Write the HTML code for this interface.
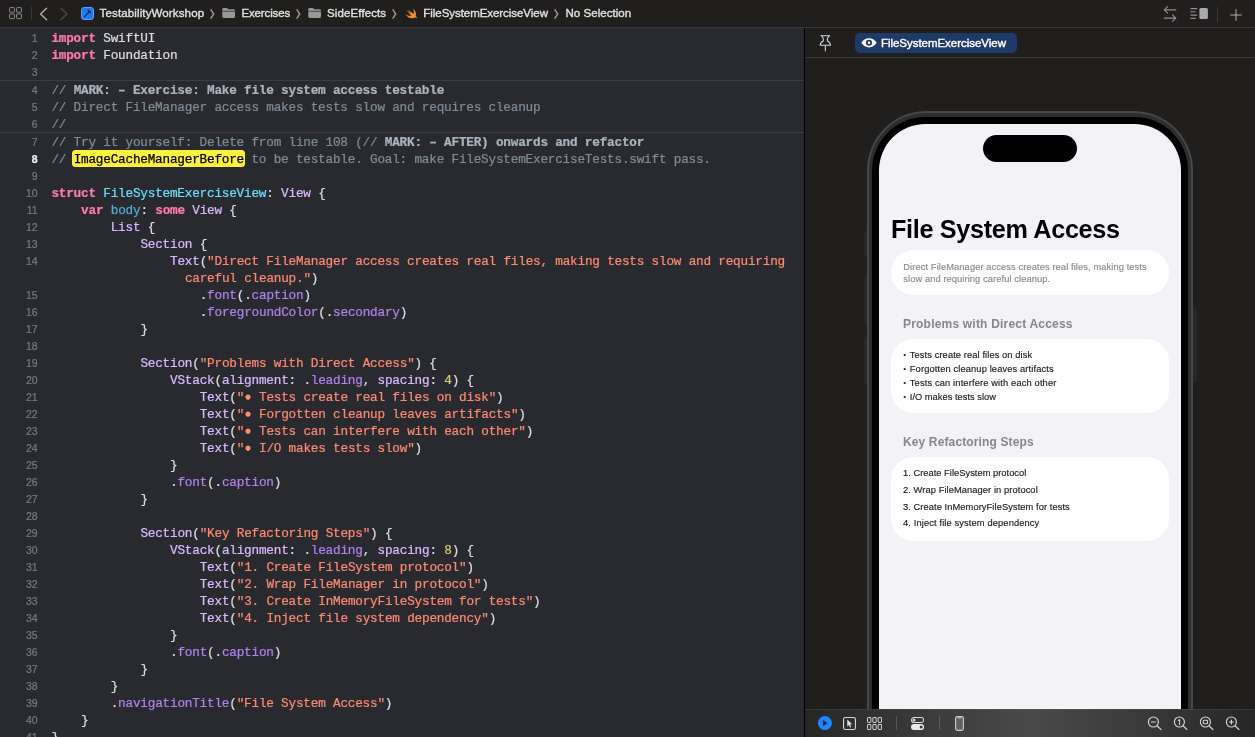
<!DOCTYPE html>
<html><head><meta charset="utf-8">
<style>
*{margin:0;padding:0;box-sizing:border-box}
html,body{width:1255px;height:737px;overflow:hidden;background:#292a30}
body{position:relative;will-change:transform;font-family:"Liberation Sans",sans-serif;-webkit-font-smoothing:antialiased}
.abs{position:absolute}
#topbar{position:absolute;left:0;top:0;width:1255px;height:27px;background:#201f1e}
#topline{position:absolute;left:0;top:27px;width:1255px;height:1px;background:#393837}
#editor{position:absolute;left:0;top:28px;width:804px;height:709px;background:#292a30;overflow:hidden}
#vdiv{position:absolute;left:804px;top:28px;width:1px;height:709px;background:#000}
#canvas{position:absolute;left:805px;top:28px;width:450px;height:709px;background:#201f1e;overflow:hidden}
.bc{position:absolute;top:6px;height:15px;line-height:15px;font-size:11.5px;color:#e2e2e2;white-space:nowrap;-webkit-text-stroke:0.35px #e2e2e2}
.chev{position:absolute;top:7px;color:#9a9a9c;font-size:11px;line-height:14px}
/* code */
.cl{position:absolute;height:17px;line-height:17px;font-family:"Liberation Mono",monospace;font-size:12.7px;letter-spacing:-0.205px;white-space:pre;color:#dfdfe0;-webkit-text-stroke:0.22px}
.ln{position:absolute;left:0;width:37.6px;-webkit-text-stroke:0.2px;text-align:right;height:17px;line-height:17px;font-family:"Liberation Sans",sans-serif;font-size:10.5px;color:#797a82}
.ln.cur{color:#f4f4f4;font-weight:bold}
.k{color:#ff7ab2;font-weight:bold}
.p{color:#dfdfe0}
.t{color:#dabaff}
.d{color:#6bdfff}
.o{color:#4eb0cc}
.s{color:#fe8a72}
.n{color:#d9c97c}
.c{color:#7f8c98}
.m{color:#aab4bf;font-weight:bold}
.f{color:#b281eb}
.hl{color:#000;position:relative;-webkit-text-stroke:0.25px #000}
#hlbox{position:absolute;left:72px;top:150px;width:173px;height:17px;border-radius:3.5px;background:#fcf13b}
.card{background:#fff;border-radius:22px}
.cap{-webkit-text-stroke:0.15px;font-size:9.3px;height:12px;line-height:12px;color:#1b1b1d;white-space:nowrap}
.hdr{font-size:12px;font-weight:bold;height:16px;line-height:16px;color:#86868b;white-space:nowrap}
.bl{font-size:7px}
.bu{display:inline-block;width:7.415px;height:17px;vertical-align:top;background:radial-gradient(circle at 50% 48%,#fe8a72 0,#fe8a72 2.25px,rgba(254,138,114,0) 2.95px)}
.sep{position:absolute;left:0;width:804px;height:1px;background:#3d3e45}
</style></head><body>
<div id="topbar"></div>
<div id="topline"></div>
<div id="editor"></div>
<div class="sep" style="top:80px"></div>
<div class="sep" style="top:132px"></div>
<div id="hlbox"></div>
<div class="ln" style="top:30px">1</div>
<div class="cl" style="top:30px;left:51.4px"><span class="k">import</span><span class="p"> SwiftUI</span></div>
<div class="ln" style="top:47px">2</div>
<div class="cl" style="top:47px;left:51.4px"><span class="k">import</span><span class="p"> Foundation</span></div>
<div class="ln" style="top:64px">3</div>
<div class="ln" style="top:82px">4</div>
<div class="cl" style="top:82px;left:51.4px"><span class="c">// </span><span class="m">MARK: – Exercise: Make file system access testable</span></div>
<div class="ln" style="top:99px">5</div>
<div class="cl" style="top:99px;left:51.4px"><span class="c">// Direct FileManager access makes tests slow and requires cleanup</span></div>
<div class="ln" style="top:116px">6</div>
<div class="cl" style="top:116px;left:51.4px"><span class="c">//</span></div>
<div class="ln" style="top:134px">7</div>
<div class="cl" style="top:134px;left:51.4px"><span class="c">// Try it yourself: Delete from line 108 (// </span><span class="m">MARK: – AFTER) onwards and refactor</span></div>
<div class="ln cur" style="top:151px">8</div>
<div class="cl" style="top:151px;left:51.4px"><span class="c">// </span><span class="hl">ImageCacheManagerBefore</span><span class="c"> to be testable. Goal: make FileSystemExerciseTests.swift pass.</span></div>
<div class="ln" style="top:168px">9</div>
<div class="ln" style="top:185px">10</div>
<div class="cl" style="top:185px;left:51.4px"><span class="k">struct</span><span class="p"> </span><span class="d">FileSystemExerciseView</span><span class="p">: </span><span class="t">View</span><span class="p"> {</span></div>
<div class="ln" style="top:202px">11</div>
<div class="cl" style="top:202px;left:81.1px"><span class="k">var</span><span class="p"> </span><span class="o">body</span><span class="p">: </span><span class="k">some</span><span class="p"> </span><span class="t">View</span><span class="p"> {</span></div>
<div class="ln" style="top:219px">12</div>
<div class="cl" style="top:219px;left:110.7px"><span class="t">List</span><span class="p"> {</span></div>
<div class="ln" style="top:236px">13</div>
<div class="cl" style="top:236px;left:140.4px"><span class="t">Section</span><span class="p"> {</span></div>
<div class="ln" style="top:253px">14</div>
<div class="cl" style="top:253px;left:170.0px"><span class="t">Text</span><span class="p">(</span><span class="s">"Direct FileManager access creates real files, making tests slow and requiring</span></div>
<div class="cl" style="top:270px;left:184.9px"><span class="s">careful cleanup."</span><span class="p">)</span></div>
<div class="ln" style="top:287px">15</div>
<div class="cl" style="top:287px;left:199.7px"><span class="p">.</span><span class="f">font</span><span class="p">(.</span><span class="f">caption</span><span class="p">)</span></div>
<div class="ln" style="top:304px">16</div>
<div class="cl" style="top:304px;left:199.7px"><span class="p">.</span><span class="f">foregroundColor</span><span class="p">(.</span><span class="f">secondary</span><span class="p">)</span></div>
<div class="ln" style="top:321px">17</div>
<div class="cl" style="top:321px;left:140.4px"><span class="p">}</span></div>
<div class="ln" style="top:338px">18</div>
<div class="ln" style="top:355px">19</div>
<div class="cl" style="top:355px;left:140.4px"><span class="t">Section</span><span class="p">(</span><span class="s">"Problems with Direct Access"</span><span class="p">) {</span></div>
<div class="ln" style="top:372px">20</div>
<div class="cl" style="top:372px;left:170.0px"><span class="t">VStack</span><span class="p">(</span><span class="t">alignment</span><span class="p">: .</span><span class="f">leading</span><span class="p">, </span><span class="t">spacing</span><span class="p">: </span><span class="n">4</span><span class="p">) {</span></div>
<div class="ln" style="top:389px">21</div>
<div class="cl" style="top:389px;left:199.7px"><span class="t">Text</span><span class="p">(</span><span class="s">"<span class="bu"></span> Tests create real files on disk"</span><span class="p">)</span></div>
<div class="ln" style="top:406px">22</div>
<div class="cl" style="top:406px;left:199.7px"><span class="t">Text</span><span class="p">(</span><span class="s">"<span class="bu"></span> Forgotten cleanup leaves artifacts"</span><span class="p">)</span></div>
<div class="ln" style="top:423px">23</div>
<div class="cl" style="top:423px;left:199.7px"><span class="t">Text</span><span class="p">(</span><span class="s">"<span class="bu"></span> Tests can interfere with each other"</span><span class="p">)</span></div>
<div class="ln" style="top:440px">24</div>
<div class="cl" style="top:440px;left:199.7px"><span class="t">Text</span><span class="p">(</span><span class="s">"<span class="bu"></span> I/O makes tests slow"</span><span class="p">)</span></div>
<div class="ln" style="top:457px">25</div>
<div class="cl" style="top:457px;left:170.0px"><span class="p">}</span></div>
<div class="ln" style="top:474px">26</div>
<div class="cl" style="top:474px;left:170.0px"><span class="p">.</span><span class="f">font</span><span class="p">(.</span><span class="f">caption</span><span class="p">)</span></div>
<div class="ln" style="top:491px">27</div>
<div class="cl" style="top:491px;left:140.4px"><span class="p">}</span></div>
<div class="ln" style="top:508px">28</div>
<div class="ln" style="top:525px">29</div>
<div class="cl" style="top:525px;left:140.4px"><span class="t">Section</span><span class="p">(</span><span class="s">"Key Refactoring Steps"</span><span class="p">) {</span></div>
<div class="ln" style="top:542px">30</div>
<div class="cl" style="top:542px;left:170.0px"><span class="t">VStack</span><span class="p">(</span><span class="t">alignment</span><span class="p">: .</span><span class="f">leading</span><span class="p">, </span><span class="t">spacing</span><span class="p">: </span><span class="n">8</span><span class="p">) {</span></div>
<div class="ln" style="top:559px">31</div>
<div class="cl" style="top:559px;left:199.7px"><span class="t">Text</span><span class="p">(</span><span class="s">"1. Create FileSystem protocol"</span><span class="p">)</span></div>
<div class="ln" style="top:576px">32</div>
<div class="cl" style="top:576px;left:199.7px"><span class="t">Text</span><span class="p">(</span><span class="s">"2. Wrap FileManager in protocol"</span><span class="p">)</span></div>
<div class="ln" style="top:593px">33</div>
<div class="cl" style="top:593px;left:199.7px"><span class="t">Text</span><span class="p">(</span><span class="s">"3. Create InMemoryFileSystem for tests"</span><span class="p">)</span></div>
<div class="ln" style="top:610px">34</div>
<div class="cl" style="top:610px;left:199.7px"><span class="t">Text</span><span class="p">(</span><span class="s">"4. Inject file system dependency"</span><span class="p">)</span></div>
<div class="ln" style="top:627px">35</div>
<div class="cl" style="top:627px;left:170.0px"><span class="p">}</span></div>
<div class="ln" style="top:644px">36</div>
<div class="cl" style="top:644px;left:170.0px"><span class="p">.</span><span class="f">font</span><span class="p">(.</span><span class="f">caption</span><span class="p">)</span></div>
<div class="ln" style="top:661px">37</div>
<div class="cl" style="top:661px;left:140.4px"><span class="p">}</span></div>
<div class="ln" style="top:678px">38</div>
<div class="cl" style="top:678px;left:110.7px"><span class="p">}</span></div>
<div class="ln" style="top:695px">39</div>
<div class="cl" style="top:695px;left:110.7px"><span class="p">.</span><span class="f">navigationTitle</span><span class="p">(</span><span class="s">"File System Access"</span><span class="p">)</span></div>
<div class="ln" style="top:712px">40</div>
<div class="cl" style="top:712px;left:81.1px"><span class="p">}</span></div>
<div class="ln" style="top:729px">41</div>
<div class="cl" style="top:729px;left:51.4px"><span class="p">}</span></div>
<div id="vdiv"></div>
<div id="canvas"></div>
<!-- preview toolbar -->
<div class="abs" style="left:805px;top:57px;width:450px;height:1px;background:#373635"></div>
<svg class="abs" style="left:819px;top:34px" width="13" height="18" viewBox="0 0 13 18" fill="none" stroke="#dadada" stroke-width="1.05" stroke-linejoin="round" stroke-linecap="round"><path d="M2 1.8 H10.7"/><path d="M2.7 1.9 C3 3.2 4.3 3.6 4.3 5 V7 C2.3 7.9 1.2 9.4 1.2 11.2 H11.5 C11.5 9.4 10.4 7.9 8.4 7 V5 C8.4 3.6 9.7 3.2 10 1.9"/><path d="M6.35 11.4 V16.8"/></svg>
<div class="abs" style="left:855px;top:33px;width:162px;height:20px;border-radius:5px;background:#1f3a66"></div>
<svg class="abs" style="left:860.8px;top:38.3px" width="16" height="9.6" viewBox="0 0 16 10" preserveAspectRatio="none"><path d="M0.3 5 C2.4 1.6 5 0.2 8 0.2 C11 0.2 13.6 1.6 15.7 5 C13.6 8.4 11 9.8 8 9.8 C5 9.8 2.4 8.4 0.3 5 Z" fill="#fff"/><circle cx="8" cy="5" r="3.1" fill="#1f3a66"/><circle cx="8" cy="5" r="1.25" fill="#fff"/></svg>
<div class="abs" style="left:880.9px;top:36px;height:15px;line-height:15px;font-size:11.5px;color:#fff;letter-spacing:-0.03px;white-space:nowrap;-webkit-text-stroke:0.4px #fff">FileSystemExerciseView</div>

<!-- phone -->
<div id="phone" class="abs" style="left:867px;top:110.8px;width:326px;height:700px;border-radius:59.5px;background:#484848"></div>
<div class="abs" style="left:869px;top:113.4px;width:322px;height:700px;border-radius:57px;background:#2d2d2d"></div>
<div class="abs" style="left:872px;top:117px;width:316px;height:700px;border-radius:53.5px;background:#000"></div>
<div id="screen" class="abs" style="left:879px;top:124px;width:302px;height:700px;border-radius:46.5px;background:#f2f2f7"></div>
<!-- side buttons -->
<div class="abs" style="left:864px;top:231px;width:3px;height:25px;background:#292827;border-radius:1px 0 0 1px"></div>
<div class="abs" style="left:864px;top:277px;width:3px;height:46px;background:#292827;border-radius:1px 0 0 1px"></div>
<div class="abs" style="left:864px;top:337px;width:3px;height:47px;background:#292827;border-radius:1px 0 0 1px"></div>
<div class="abs" style="left:1193px;top:308px;width:4px;height:74px;background:#272625;border-radius:0 1px 1px 0"></div>
<!-- island -->
<div class="abs" style="left:983px;top:134.5px;width:94px;height:27px;border-radius:14px;background:#000"></div>
<!-- title -->
<div class="abs" id="title" style="left:891px;top:213px;height:32px;line-height:32px;font-size:25.2px;font-weight:bold;color:#000;white-space:nowrap;letter-spacing:-0.31px">File System Access</div>
<!-- card1 -->
<div class="abs card" style="left:891px;top:250px;width:278px;height:45px"></div>
<div class="abs cap" style="left:903.3px;top:260.5px;color:#8a8a8e;letter-spacing:0.1px">Direct FileManager access creates real files, making tests</div>
<div class="abs cap" style="left:903.3px;top:272.5px;color:#8a8a8e;letter-spacing:0.09px">slow and requiring careful cleanup.</div>
<!-- header 1 -->
<div class="abs hdr" style="left:903px;top:316px;letter-spacing:0.2px">Problems with Direct Access</div>
<div class="abs card" style="left:891px;top:338.5px;width:278px;height:74.5px"></div>
<div class="abs cap bl" style="left:903.6px;top:349px">•</div><div class="abs cap" style="left:909.8px;top:349px;letter-spacing:0.1px">Tests create real files on disk</div>
<div class="abs cap bl" style="left:903.6px;top:362.8px">•</div><div class="abs cap" style="left:909.8px;top:362.8px;letter-spacing:0.13px">Forgotten cleanup leaves artifacts</div>
<div class="abs cap bl" style="left:903.6px;top:376.6px">•</div><div class="abs cap" style="left:909.8px;top:376.6px;letter-spacing:0.146px">Tests can interfere with each other</div>
<div class="abs cap bl" style="left:903.6px;top:390.7px">•</div><div class="abs cap" style="left:909.8px;top:390.7px;letter-spacing:0.02px">I/O makes tests slow</div>
<!-- header 2 -->
<div class="abs hdr" style="left:903px;top:434px;letter-spacing:0.13px">Key Refactoring Steps</div>
<div class="abs card" style="left:891px;top:456.5px;width:278px;height:84px"></div>
<div class="abs cap" style="left:903px;top:466.8px;letter-spacing:0.03px">1. Create FileSystem protocol</div>
<div class="abs cap" style="left:903px;top:483.6px;letter-spacing:0.086px">2. Wrap FileManager in protocol</div>
<div class="abs cap" style="left:903px;top:500.5px;letter-spacing:0.08px">3. Create InMemoryFileSystem for tests</div>
<div class="abs cap" style="left:903px;top:517.2px;letter-spacing:0.128px">4. Inject file system dependency</div>

<!-- bottom toolbar -->
<div class="abs" style="left:805px;top:708.8px;width:450px;height:29px;background:linear-gradient(90deg,#272626 0%,#3a3a3a 25%,#494949 50%,#3a3a3a 75%,#272626 100%)"></div>
<div class="abs" style="left:805px;top:708.8px;width:450px;height:1px;background:rgba(255,255,255,0.07)"></div>
<!-- bottom toolbar icons -->
<svg class="abs" style="left:818px;top:716px" width="15" height="15" viewBox="0 0 15 15"><circle cx="6.95" cy="7.05" r="7" fill="#1e86ff"/><path d="M5.2 4.4 L9.3 7.05 L5.2 9.7 Z" fill="#2a2827" stroke="#2a2827" stroke-width="0.4" stroke-linejoin="round"/></svg>
<svg class="abs" style="left:843px;top:717px" width="13" height="13" viewBox="0 0 13 13"><rect x="0.55" y="0.55" width="11.9" height="11.9" rx="1.8" fill="none" stroke="#d6d6d6" stroke-width="1.1"/><path d="M4.3 2.6 L4.3 9.4 L5.9 7.9 L7.1 10.5 L8.2 10 L7 7.4 L9.2 7.3 Z" fill="#e4e4e4"/></svg>
<svg class="abs" style="left:867px;top:717px" width="15.3" height="13" viewBox="0 0 16 13" preserveAspectRatio="none" fill="none" stroke="#d0d0d0" stroke-width="1.05"><rect x="0.55" y="0.55" width="3.5" height="4.9" rx="0.9"/><rect x="6.1" y="0.55" width="3.5" height="4.9" rx="0.9"/><rect x="11.65" y="0.55" width="3.5" height="4.9" rx="0.9"/><rect x="0.55" y="7.55" width="3.5" height="4.9" rx="0.9"/><rect x="6.1" y="7.55" width="3.5" height="4.9" rx="0.9"/><rect x="11.65" y="7.55" width="3.5" height="4.9" rx="0.9"/></svg>
<div class="abs" style="left:896px;top:716px;width:1px;height:14px;background:rgba(255,255,255,0.16)"></div>
<svg class="abs" style="left:911px;top:717px" width="13.2" height="13" viewBox="0 0 14 13" preserveAspectRatio="none"><rect x="0.55" y="0.55" width="12.9" height="4.9" rx="2.45" fill="none" stroke="#dcdcdc" stroke-width="1.1"/><circle cx="3.2" cy="3" r="1.5" fill="#dcdcdc"/><rect x="0" y="7" width="14" height="6" rx="3" fill="#ebebeb"/><circle cx="10.8" cy="10" r="1.6" fill="#3a3a3a"/></svg>
<div class="abs" style="left:939px;top:716px;width:1px;height:14px;background:rgba(255,255,255,0.16)"></div>
<svg class="abs" style="left:955px;top:716px" width="9" height="15" viewBox="0 0 9 15"><rect x="0.6" y="0.6" width="7.8" height="13.8" rx="1.8" fill="rgba(255,255,255,0.18)" stroke="#cfcfcf" stroke-width="1.1"/><path d="M3.2 1.9 H5.8" stroke="#cfcfcf" stroke-width="0.9" stroke-linecap="round"/></svg>
<!-- zoom icons -->
<svg class="abs" style="left:1146px;top:715px" width="17" height="17" viewBox="0 0 17 17" fill="none" stroke="#d8d8d8" stroke-width="1.15" stroke-linecap="round"><circle cx="7.4" cy="7" r="5"/><path d="M11.2 10.8 L14.9 14.5"/><path d="M5.4 7 H9.4" stroke-width="1.2"/></svg>
<svg class="abs" style="left:1172px;top:715px" width="17" height="17" viewBox="0 0 17 17" fill="none" stroke="#d8d8d8" stroke-width="1.15" stroke-linecap="round" stroke-linejoin="round"><circle cx="7.4" cy="7" r="5"/><path d="M11.2 10.8 L14.9 14.5"/><path d="M6.4 5.4 L7.6 4.6 V9.5" stroke-width="1.05"/></svg>
<svg class="abs" style="left:1198px;top:715px" width="17" height="17" viewBox="0 0 17 17" fill="none" stroke="#d8d8d8" stroke-width="1.15" stroke-linecap="round"><circle cx="7.4" cy="7" r="5"/><path d="M11.2 10.8 L14.9 14.5"/><rect x="5.3" y="5.2" width="4.2" height="3.6" rx="0.9" stroke-width="1.05"/></svg>
<svg class="abs" style="left:1224px;top:715px" width="17" height="17" viewBox="0 0 17 17" fill="none" stroke="#d8d8d8" stroke-width="1.15" stroke-linecap="round"><circle cx="7.4" cy="7" r="5"/><path d="M11.2 10.8 L14.9 14.5"/><path d="M5.4 7 H9.4 M7.4 5 V9" stroke-width="1.2"/></svg>


<!-- top bar icons + breadcrumb -->
<svg class="abs" style="left:8.6px;top:7.3px" width="13.3" height="12.4" viewBox="0 0 14 13" fill="none" stroke="#8f8f92" stroke-width="1">
<rect x="0.6" y="0.6" width="5.2" height="4.9" rx="0.9"/><rect x="7.9" y="0.6" width="5.2" height="4.9" rx="0.9"/><rect x="0.6" y="7.3" width="5.2" height="4.9" rx="0.9"/><rect x="7.9" y="7.3" width="5.2" height="4.9" rx="0.9"/></svg>
<div class="abs" style="left:31px;top:7px;width:1px;height:13px;background:#3a3a3c"></div>
<svg class="abs" style="left:39px;top:7px" width="10" height="14" viewBox="0 0 10 14" fill="none" stroke="#b4b4b6" stroke-width="1.3" stroke-linecap="round" stroke-linejoin="round"><path d="M7.6 1.2 L1.6 7 L7.6 12.8"/></svg>
<svg class="abs" style="left:59px;top:7px" width="10" height="14" viewBox="0 0 10 14" fill="none" stroke="#4e4e50" stroke-width="1.3" stroke-linecap="round" stroke-linejoin="round"><path d="M2 1.2 L8 7 L2 12.8"/></svg>
<!-- project icon -->
<svg class="abs" style="left:81px;top:7px" width="13" height="13" viewBox="0 0 13 13"><rect x="0.5" y="0.5" width="12" height="12" rx="2.6" fill="#1a7cf2" stroke="#5ba3f9" stroke-width="1"/><path d="M3.6 9.6 L8.2 4.7" stroke="#0d2547" stroke-width="1.25" stroke-linecap="round"/><path d="M6.8 3.2 L9.9 5.9" stroke="#0d2547" stroke-width="1.7" stroke-linecap="butt"/></svg>
<div class="bc" style="left:99.6px;letter-spacing:0.134px">TestabilityWorkshop</div>
<svg class="abs chv" style="left:210px;top:8.5px" width="5" height="10" viewBox="0 0 5 10" fill="none" stroke="#9a9a9c" stroke-width="1.4" stroke-linecap="round" stroke-linejoin="round"><path d="M1 0.8 L3.7 5 L1 9.2"/></svg>
<svg class="abs" style="left:222px;top:7.5px" width="13.3" height="10" viewBox="0 0 14 11"><path d="M0 1.6 Q0 0 1.6 0 H4.6 Q5.4 0 6 0.7 L6.6 1.4 H12.4 Q14 1.4 14 3 V9.4 Q14 11 12.4 11 H1.6 Q0 11 0 9.4 Z" fill="#98989b"/><rect x="0" y="3.1" width="14" height="0.9" fill="#201f1e" opacity="0.8"/></svg>
<div class="bc" style="left:241.5px;letter-spacing:-0.149px">Exercises</div>
<svg class="abs chv" style="left:296px;top:8.5px" width="5" height="10" viewBox="0 0 5 10" fill="none" stroke="#9a9a9c" stroke-width="1.4" stroke-linecap="round" stroke-linejoin="round"><path d="M1 0.8 L3.7 5 L1 9.2"/></svg>
<svg class="abs" style="left:307.6px;top:7.5px" width="13.3" height="10" viewBox="0 0 14 11"><path d="M0 1.6 Q0 0 1.6 0 H4.6 Q5.4 0 6 0.7 L6.6 1.4 H12.4 Q14 1.4 14 3 V9.4 Q14 11 12.4 11 H1.6 Q0 11 0 9.4 Z" fill="#98989b"/><rect x="0" y="3.1" width="14" height="0.9" fill="#201f1e" opacity="0.8"/></svg>
<div class="bc" style="left:327.1px;letter-spacing:0.104px">SideEffects</div>
<svg class="abs chv" style="left:392px;top:8.5px" width="5" height="10" viewBox="0 0 5 10" fill="none" stroke="#9a9a9c" stroke-width="1.4" stroke-linecap="round" stroke-linejoin="round"><path d="M1 0.8 L3.7 5 L1 9.2"/></svg>
<!-- swift icon -->
<svg class="abs" style="left:405.3px;top:8.3px" width="13" height="11.2" viewBox="0 0 14 12"><path d="M8.2 0.6 C11.4 2.8 12.4 6 11.6 8.2 C12.6 9.4 12.8 10.6 12.6 11.2 C11.8 10.2 11 10 10.2 10.4 C8.6 11.4 5.8 11.4 3.6 10 C2.2 9.2 1 8 0.4 6.8 C2.4 8.2 5 9 7 8 C4.8 6.4 3 4.2 1.6 2.2 C3.4 3.8 5.2 5 6.6 5.8 C5.2 4.4 4 2.8 3.2 1.6 C5.2 3.4 7.6 5.4 9.4 6.4 C9.8 4.6 9.4 2.4 8.2 0.6 Z" fill="#f5892e"/></svg>
<div class="bc" style="left:423.3px;letter-spacing:-0.05px">FileSystemExerciseView</div>
<svg class="abs chv" style="left:553.5px;top:8.5px" width="5" height="10" viewBox="0 0 5 10" fill="none" stroke="#9a9a9c" stroke-width="1.4" stroke-linecap="round" stroke-linejoin="round"><path d="M1 0.8 L3.7 5 L1 9.2"/></svg>
<div class="bc" style="left:565.5px;letter-spacing:0.036px">No Selection</div>
<!-- right icons -->
<svg class="abs" style="left:1163px;top:6px" width="15" height="17" viewBox="0 0 15 17" fill="none" stroke="#8e8e90" stroke-width="1.15" stroke-linecap="round" stroke-linejoin="round"><path d="M12.8 3.9 H1.3 M4.6 0.6 L1.3 3.9 L4.6 7.2"/><path d="M1.3 12.1 H12.8 M9.5 8.8 L12.8 12.1 L9.5 15.4"/></svg>
<svg class="abs" style="left:1189.5px;top:8px" width="18" height="12" viewBox="0 0 18 12"><g stroke="#8e8e90" stroke-width="1.1" stroke-linecap="butt"><path d="M0.5 0.6 H7.3 M0.5 3.8 H5.7 M0.5 7.1 H7.3 M0.5 10.4 H5.7"/></g><rect x="9.4" y="0" width="8.5" height="11.1" rx="1.6" fill="#a9a9ab"/></svg>
<div class="abs" style="left:1217px;top:7px;width:1px;height:15px;background:#3a3938"></div>
<svg class="abs" style="left:1229.5px;top:8.5px" width="12" height="12" viewBox="0 0 12 12" stroke="#b0b0b2" stroke-width="1" stroke-linecap="round"><path d="M6 0.6 V11.4 M0.6 6 H11.4"/></svg>

</body></html>
